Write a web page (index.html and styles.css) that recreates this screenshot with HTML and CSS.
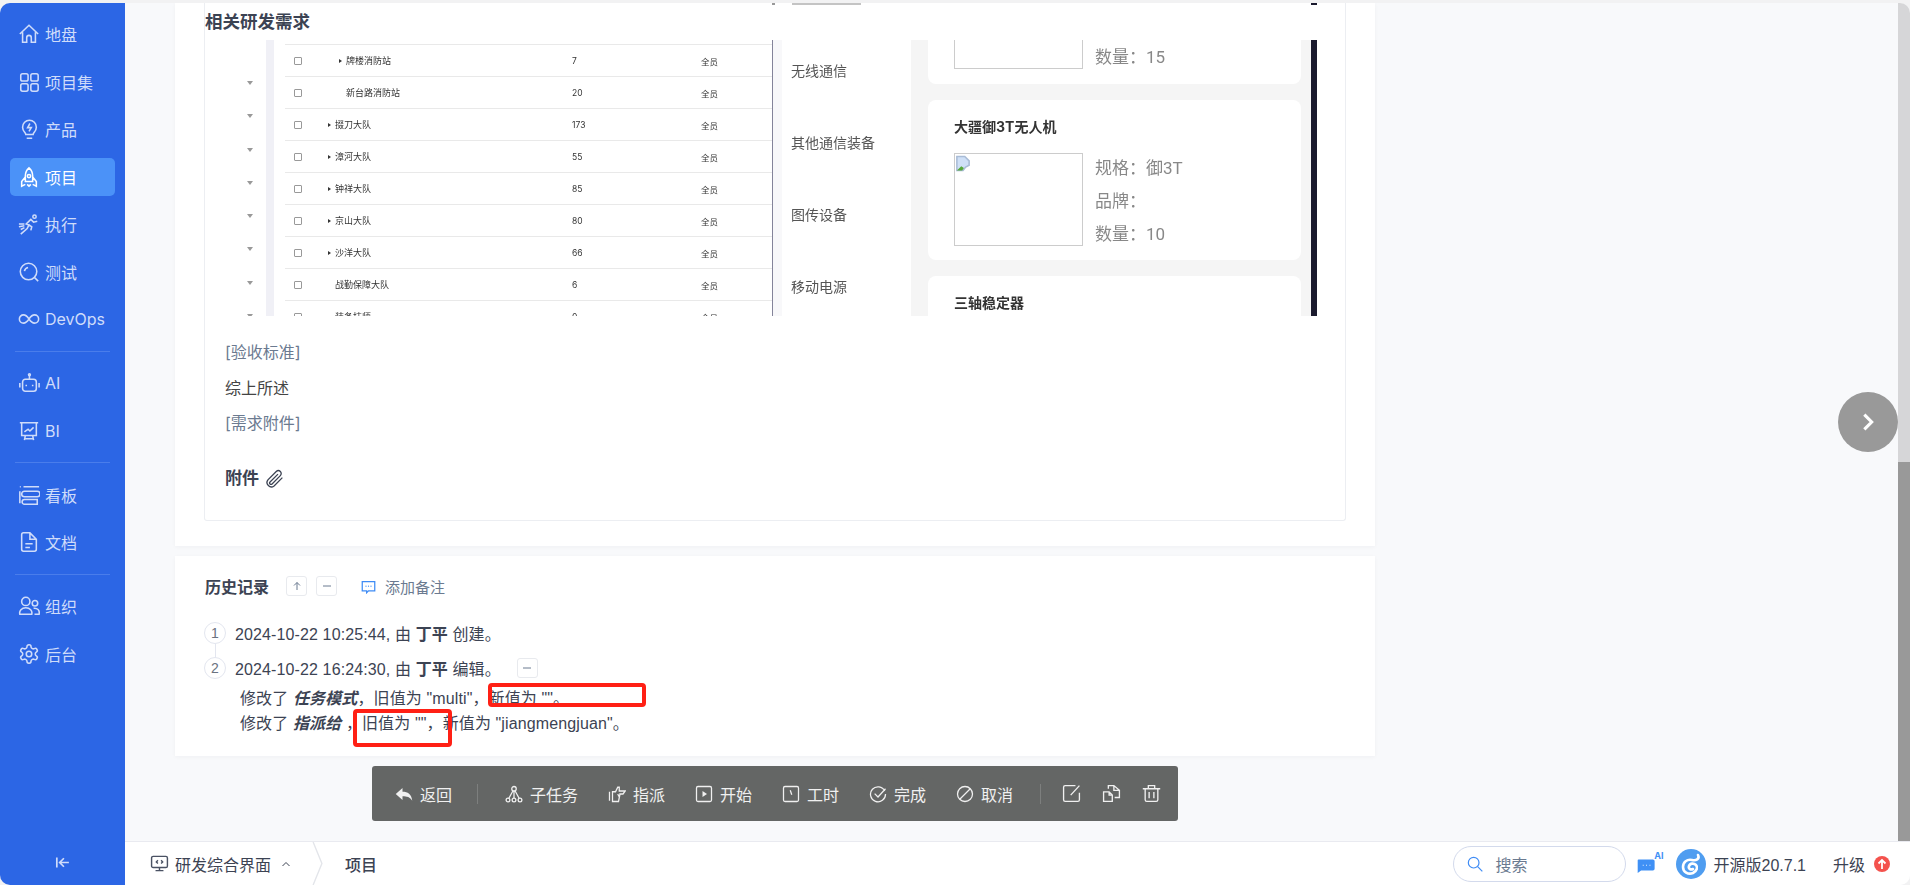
FILE: index.html
```html
<!DOCTYPE html>
<html lang="zh-CN">
<head>
    <meta charset="UTF-8">
    <title>项目 - 研发综合界面</title>
    <link rel="stylesheet" href="styles.css">
</head>
<body>
    <div class="app">
        <aside class="sidebar">
            <nav class="nav">
                <div class="nav-group">
                    <a class="nav-item"><svg viewBox="0 0 24 24"><path d="M2 12 12 2.500 22 12M5 10v11h4.500v-5a2.500 2.500 0 0 1 5 0v5H19V10"/></svg>地盘</a>
                    <a class="nav-item"><svg viewBox="0 0 24 24"><rect x="3" y="3" width="8" height="8" rx="2"/><rect x="14" y="3" width="8" height="8" rx="2"/><rect x="3" y="14" width="8" height="8" rx="2"/><rect x="14" y="14" width="8" height="8" rx="2"/></svg>项目集</a>
                    <a class="nav-item"><svg viewBox="0 0 24 24"><path d="M8.500 18c0-2-3.500-3.500-3.500-8a7.500 7.500 0 0 1 15 0c0 4.500-3.500 6-3.500 8zM9.500 22h6M13 6l-2.500 4.500h4L12 14.500"/></svg>产品</a>
                    <a class="nav-item active"><svg viewBox="0 0 24 24"><path d="M12 2c3 2.500 4 6 4 9v6H8v-6c0-3 1-6.500 4-9zM8 12l-4 5v5l4-2M16 12l4 5v5l-4-2M10 20l2 2 2-2"/><circle cx="12" cy="11" r="1.800"/></svg>项目</a>
                    <a class="nav-item"><svg viewBox="0 0 24 24"><circle cx="18" cy="4" r="1.800"/><path d="M3 23l7-6 2-4-3-1 5-5 3 3 4-1M12 13l3 2-1 4M1 12h6M1 15l6-1M3 18l4-2"/></svg>执行</a>
                    <a class="nav-item"><svg viewBox="0 0 24 24"><circle cx="11.500" cy="11.500" r="9"/><path d="M7 11a5 5 0 0 1 4-4M18 18l4 4"/></svg>测试</a>
                    <a class="nav-item"><svg viewBox="0 0 24 24"><path d="M12 12c-2-3-3.500-4.500-6-4.500a4.500 4.500 0 0 0 0 9c2.500 0 4-1.500 6-4.500s3.500-4.500 6-4.500a4.500 4.500 0 0 1 0 9c-2.500 0-4-1.500-6-4.500z"/></svg>DevOps</a>
                </div>
                <hr class="nav-line">
                <div class="nav-group">
                    <a class="nav-item"><svg viewBox="0 0 24 24"><rect x="5" y="8" width="15" height="13" rx="3"/><path d="M12.500 8V4M2 12v5M23 12v5"/><circle cx="12.500" cy="3" r="1"/><path d="M9 14v1.500M16 14v1.500"/></svg>AI</a>
                    <a class="nav-item"><svg viewBox="0 0 24 24"><path d="M2 3h20M4 3v14h16V3M8 17l-1 5M16 17l1 5M6.500 20.500h11M7 13l4-3 2 2 4-4"/></svg>BI</a>
                </div>
                <hr class="nav-line">
                <div class="nav-group">
                    <a class="nav-item"><svg viewBox="0 0 24 24"><path d="M6 3h17M2 3h1M2 8v13M7 8h14a2 2 0 0 1 0 6H7a2 2 0 0 1 0-6zM7 17h14v5H7a2 2 0 0 1 0-5z"/></svg>看板</a>
                    <a class="nav-item"><svg viewBox="0 0 24 24"><path d="M13 2H6a2 2 0 0 0-2 2v16a2 2 0 0 0 2 2h12a2 2 0 0 0 2-2V9zM13 2v7h7M8 14h8M8 18h5"/></svg>文档</a>
                </div>
                <hr class="nav-line">
                <div class="nav-group">
                    <a class="nav-item"><svg viewBox="0 0 24 24"><circle cx="8.500" cy="7" r="4.500"/><circle cx="18.500" cy="9" r="3"/><path d="M2 21c-1-4 2-7 6.500-7s7.500 3 6.500 7zM17 14.500c4-.5 7 2 6 6.500h-5"/></svg>组织</a>
                    <a class="nav-item"><svg viewBox="0 0 24 24"><path d="M12.220 2h-.44a2 2 0 0 0-2 2v.18a2 2 0 0 1-1 1.730l-.43.25a2 2 0 0 1-2 0l-.15-.08a2 2 0 0 0-2.730.73l-.22.38a2 2 0 0 0 .73 2.730l.15.1a2 2 0 0 1 1 1.720v.51a2 2 0 0 1-1 1.740l-.15.09a2 2 0 0 0-.73 2.730l.22.38a2 2 0 0 0 2.730.73l.15-.08a2 2 0 0 1 2 0l.43.25a2 2 0 0 1 1 1.730V20a2 2 0 0 0 2 2h.44a2 2 0 0 0 2-2v-.18a2 2 0 0 1 1-1.730l.43-.25a2 2 0 0 1 2 0l.15.08a2 2 0 0 0 2.730-.73l.22-.39a2 2 0 0 0-.73-2.730l-.15-.08a2 2 0 0 1-1-1.740v-.5a2 2 0 0 1 1-1.740l.15-.09a2 2 0 0 0 .73-2.730l-.22-.38a2 2 0 0 0-2.730-.73l-.15.08a2 2 0 0 1-2 0l-.43-.25a2 2 0 0 1-1-1.730V4a2 2 0 0 0-2-2z"/><circle cx="12" cy="12" r="3"/></svg>后台</a>
                </div>
            </nav>
            <div class="collapse"><svg viewBox="0 0 24 24"><path d="M4 5v14M21 12H9M14 6l-6 6 6 6"/></svg></div>
        </aside>

        <div class="main">
            <div class="main-body">
                <div class="scroller">
                    <section class="card">
                        <div class="detail-box">
                            <div class="peek"><i class="peek-dot"></i><i class="peek-text"></i><i class="peek-edge"></i></div>
                            <h2 class="detail-title">相关研发需求</h2>
                            <div class="shot">
                                <div class="shot-arrows">
                                    <i></i><i></i><i></i><i></i><i></i><i></i><i></i><i></i>
                                </div>
                                <div class="shot-band"></div>
                                <div class="shot-table">
                                    <div class="row"><b class="check"></b><span class="name sub"><em></em>牌楼消防站</span><span class="num">7</span><span>全员</span></div>
                                    <div class="row"><b class="check"></b><span class="name sub">新台路消防站</span><span class="num">20</span><span>全员</span></div>
                                    <div class="row"><b class="check"></b><span class="name"><em></em>掇刀大队</span><span class="num">173</span><span>全员</span></div>
                                    <div class="row"><b class="check"></b><span class="name"><em></em>漳河大队</span><span class="num">55</span><span>全员</span></div>
                                    <div class="row"><b class="check"></b><span class="name"><em></em>钟祥大队</span><span class="num">85</span><span>全员</span></div>
                                    <div class="row"><b class="check"></b><span class="name"><em></em>京山大队</span><span class="num">80</span><span>全员</span></div>
                                    <div class="row"><b class="check"></b><span class="name"><em></em>沙洋大队</span><span class="num">66</span><span>全员</span></div>
                                    <div class="row"><b class="check"></b><span class="name">战勤保障大队</span><span class="num">6</span><span>全员</span></div>
                                    <div class="row"><b class="check"></b><span class="name">装备技师</span><span class="num">0</span><span>全员</span></div>
                                </div>
                                <ul class="shot-menu">
                                    <li>无线通信</li>
                                    <li>其他通信装备</li>
                                    <li>图传设备</li>
                                    <li>移动电源</li>
                                </ul>
                                <div class="shot-panel">
                                    <div class="gear gear-cut">
                                        <div class="gear-pic"></div>
                                        <div class="gear-info"><p>数量：15</p></div>
                                    </div>
                                    <div class="gear">
                                        <h4>大疆御3T无人机</h4>
                                        <div class="gear-body">
                                            <div class="gear-pic">
                                                <svg class="broken" viewBox="0 0 16 18"><path d="M1 1h9l5 5v5l-4 2-3 4H1z" fill="#cfe0f7" stroke="#a9bcd6"/><path d="M1 17l5-5 3 2-2 3z" fill="#57a83a"/></svg>
                                            </div>
                                            <div class="gear-info"><p>规格：御3T</p><p>品牌：</p><p>数量：10</p></div>
                                        </div>
                                    </div>
                                    <div class="gear">
                                        <h4>三轴稳定器</h4>
                                    </div>
                                </div>
                                <div class="shot-edge"></div>
                            </div>
                            <p class="para para-first muted">[验收标准]</p>
                            <p class="para">综上所述</p>
                            <p class="para muted">[需求附件]</p>
                            <h3 class="files">附件
                                <svg viewBox="0 0 24 24"><path d="M21 11l-9.500 9.500a5 5 0 0 1-7-7L14 4a3.300 3.300 0 0 1 4.700 4.700l-9.500 9.500a1.600 1.600 0 0 1-2.300-2.300L16 7"/></svg>
                            </h3>
                        </div>
                    </section>

                    <section class="card history">
                        <div class="history-head">
                            <h3>历史记录</h3>
                            <button class="mini-btn"><svg viewBox="0 0 24 24"><path d="M12 20V5M6 11l6-6 6 6"/></svg></button>
                            <button class="mini-btn"><svg viewBox="0 0 24 24"><path d="M4 12h16"/></svg></button>
                            <a class="add-note"><svg viewBox="0 0 24 24"><path d="M2 4h20v15H12l-3 3v-3H2z"/><path class="dots" d="M8 11.500h.01M12 11.500h.01M16 11.500h.01"/></svg>添加备注</a>
                        </div>
                        <ol class="timeline">
                            <li class="log"><span class="step">1</span>2024-10-22 10:25:44, 由 <strong>丁平</strong> 创建。</li>
                            <li class="log"><span class="step step-link">2</span>2024-10-22 16:24:30, 由 <strong>丁平</strong> 编辑。<button class="mini-btn log-btn"><svg viewBox="0 0 24 24"><path d="M4 12h16"/></svg></button></li>
                        </ol>
                        <div class="changes">
                            <p>修改了 <b>任务模式</b>，旧值为 "multi"，新值为 ""。</p>
                            <p>修改了 <b>指派给</b> ，旧值为 ""，新值为 "jiangmengjuan"。</p>
                        </div>
                        <div class="mark mark-new"></div>
                        <div class="mark mark-old"></div>
                    </section>

                    <div class="toolbar-wrap">
                        <div class="toolbar">
                            <a class="tool"><svg viewBox="0 0 24 24"><path class="solid" d="M10 4v5c7 0 12 3 13 12-3-5-7-6-13-6v5L1 12z"/></svg>返回</a>
                            <span class="tool-line tool-line-a"></span>
                            <a class="tool"><svg viewBox="0 0 24 24"><circle cx="12" cy="5" r="3"/><circle cx="4" cy="20" r="2.500"/><circle cx="12" cy="20" r="2.500"/><circle cx="20" cy="20" r="2.500"/><path d="M10.500 8 5 18M12 8v10M13.500 8 19 18"/></svg>子任务</a>
                            <a class="tool"><svg viewBox="0 0 24 24"><path d="M2 9v12M6 9h4l3-6h2v5h8l-3 4h-4l-1 5-1 5H6zM15 12h5M13 12l2 4"/></svg>指派</a>
                            <a class="tool"><svg viewBox="0 0 24 24"><rect x="2" y="2" width="20" height="20" rx="2"/><path class="solid" d="M10 8l6 4-6 4z"/></svg>开始</a>
                            <a class="tool"><svg viewBox="0 0 24 24"><rect x="2" y="2" width="20" height="20" rx="2"/><path d="M11 7l2 6"/></svg>工时</a>
                            <a class="tool"><svg viewBox="0 0 24 24"><path d="M21 8a10 10 0 1 0 1 4M7.500 11.500 12 16l10-11"/></svg>完成</a>
                            <a class="tool"><svg viewBox="0 0 24 24"><circle cx="12" cy="12" r="10"/><path d="M5 19 19 5"/></svg>取消</a>
                            <span class="tool-line tool-line-b"></span>
                            <a class="tool tool-icon"><svg viewBox="0 0 24 24"><path d="M22 11v9a2 2 0 0 1-2 2H4a2 2 0 0 1-2-2V4a2 2 0 0 1 2-2h13M22 2 11 14"/></svg></a>
                            <a class="tool tool-icon"><svg viewBox="0 0 24 24"><path d="M2 10h7l4 4v8H2zM9 10v4h4M8 6V2h7l7 6v9h-6M15 2v6h7"/></svg></a>
                            <a class="tool tool-icon"><svg viewBox="0 0 24 24"><path d="M1 6h22M8 6V2h8v4M4 6v14a2 2 0 0 0 2 2h12a2 2 0 0 0 2-2V6M9 10v8M15 10v8"/></svg></a>
                        </div>
                    </div>

                    <button class="next-btn"><svg viewBox="0 0 24 24"><path d="M8 4l8 8-8 8"/></svg></button>
                </div>
                <div class="scrollbar"><div class="scroll-thumb"></div></div>
            </div>

            <footer class="footer">
                <div class="crumbs">
                    <svg class="crumb-icon" viewBox="0 0 24 24"><rect x="2" y="3" width="20" height="14" rx="2"/><path d="M12 17v4M7 21h10M10 8l-2 2 2 2M14 8l2 2-2 2"/></svg>
                    <span class="crumb-app">研发综合界面</span>
                    <svg class="crumb-caret" viewBox="0 0 24 24"><path d="M5 16l7-7 7 7"/></svg>
                    <svg class="crumb-sep" viewBox="0 0 12 44"><path d="M1 0l9 22-9 22"/></svg>
                    <span class="crumb-now">项目</span>
                </div>
                <div class="foot-right">
                    <div class="search">
                        <svg viewBox="0 0 24 24"><circle cx="10" cy="10" r="8"/><path d="M16 16l7 7"/></svg>
                        <span>搜索</span>
                    </div>
                    <div class="ai-chat">
                        <svg viewBox="0 0 26 20"><path d="M3 4h17a2 2 0 0 1 2 2v9a2 2 0 0 1-2 2H6l-4 3V5a1 1 0 0 1 1-1z" fill="#3f90f5"/><path d="M8 11h1M12 11h1M16 11h1" stroke="#fff" stroke-width="1.200"/></svg>
                        <span>AI</span>
                    </div>
                    <svg class="logo" viewBox="0 0 30 30"><circle cx="15" cy="15" r="15" fill="#4f9df0"/><path d="M22 6c2 4-2 6-6 5-5-1-9 2-9 7s5 8 10 6c4-2 5-6 3-8s-6-2-7 1 2 4 4 3" fill="none" stroke="#fff" stroke-width="2.600" stroke-linecap="round"/></svg>
                    <span class="version">开源版20.7.1</span>
                    <span class="upgrade">升级</span>
                    <svg class="up-dot" viewBox="0 0 16 16"><circle cx="8" cy="8" r="8" fill="#f4524d"/><path d="M8 13V4M4.500 7.500 8 4l3.500 3.500" fill="none" stroke="#fff" stroke-width="1.800"/></svg>
                </div>
            </footer>
        </div>
    </div>
</body>
</html>
```

FILE: styles.css
```css
:root {
    --blue: #2c66e5;
    --page: #f8f9fb;
    --text: #3c4353;
    --muted: #6b7a90;
    --line: #eceef2;
}

* {
    box-sizing: border-box;
}

html, body {
    height: 100%;
    overflow: hidden;
}

body {
    margin: 0;
    font-family: Inter, "Noto Sans CJK SC", sans-serif;
    font-size: 15px;
    color: var(--text);
    background: #f2f2f3;
}

svg {
    fill: none;
    stroke: currentColor;
    stroke-width: 1.8;
    flex: none;
}

.app {
    display: flex;
    height: 885px;
    padding-top: 3px;
}

/* sidebar */
.sidebar {
    width: 125px;
    flex: none;
    display: flex;
    flex-direction: column;
    justify-content: space-between;
    background: var(--blue);
    border-radius: 10px 0 0 10px;
}

.nav {
    padding-top: 12px;
}

.nav-group {
    display: flex;
    flex-direction: column;
    gap: 9.5px;
}

.nav-item {
    display: flex;
    align-items: center;
    gap: 5px;
    height: 38px;
    margin: 0 10px;
    padding-left: 8px;
    border-radius: 5px;
    font-size: 16px;
    color: #cfdcfa;
}

.nav-item svg {
    width: 22px;
    height: 22px;
    stroke-width: 1.7;
}

.nav-item.active {
    background: #4b92f8;
    color: #fff;
}

.nav-line {
    height: 1px;
    margin: 12.5px 15px;
    border: 0;
    background: #4a7deb;
}

.collapse {
    display: flex;
    justify-content: center;
    padding-bottom: 14px;
    color: #cfdcfa;
}

.collapse svg {
    width: 17px;
    height: 17px;
    stroke-width: 2.4;
}

/* main column */
.main {
    flex: 1;
    min-width: 0;
    display: flex;
    flex-direction: column;
    background: var(--page);
    border-radius: 0 10px 10px 0;
    overflow: hidden;
}

.main-body {
    flex: 1;
    min-height: 0;
    display: flex;
}

.scroller {
    position: relative;
    flex: 1;
    padding-left: 50px;
    overflow: hidden;
}

.scrollbar {
    width: 12px;
    flex: none;
    padding-top: 459px;
    background: #d6d6d8;
}

.scroll-thumb {
    height: 100%;
    background: #999;
}

.card {
    width: 1200px;
    padding: 0 29px 25px;
    background: #fff;
    box-shadow: 0 1px 4px rgba(20, 30, 60, .04);
}

.detail-box {
    height: 518px;
    padding: 0 20px 0 20px;
    border: 1px solid var(--line);
    border-top: 0;
    border-radius: 0 0 3px 3px;
}

/* bottom of the picture showing above the sticky title */
.peek {
    display: flex;
    align-items: stretch;
    width: 1092px;
    height: 2px;
    padding-left: 547px;
}

.peek-dot {
    width: 3px;
    background: #999;
}

.peek-text {
    width: 69px;
    margin-left: 17px;
    background: #c4c4c4;
}

.peek-edge {
    width: 6px;
    margin-left: auto;
    background: #1a1a2e;
}

.detail-title {
    height: 35px;
    margin: 0 0 0 -20px;
    padding-top: 5px;
    font-size: 17.500px;
    line-height: 24px;
    font-weight: 700;
    white-space: nowrap;
}

/* the picture pasted in the description */
.shot {
    display: flex;
    width: 1092px;
    height: 276px;
    overflow: hidden;
    filter: blur(.35px);
}

.shot-arrows {
    width: 41px;
    flex: none;
    display: flex;
    flex-direction: column;
    align-items: center;
    gap: 29.3px;
    padding: 41px 0 0 9px;
}

.shot-arrows i {
    width: 0;
    height: 0;
    border: 3px solid transparent;
    border-top: 4px solid #999;
    border-bottom: 0;
}

.shot-band {
    width: 8px;
    flex: none;
    margin-right: 11px;
    background: #f0f0f6;
}

.shot-table {
    width: 488px;
    flex: none;
    padding-top: 4px;
    border-right: 1px solid #84849a;
    font-size: 8.500px;
    color: #333;
}

.row {
    display: flex;
    align-items: center;
    height: 32px;
    border-top: 1px solid #e9e9e9;
}

.check {
    width: 8px;
    height: 8px;
    margin-left: 9px;
    border: 1px solid #999;
    border-radius: 1px;
}

.name {
    display: flex;
    align-items: center;
    width: 270px;
    padding-left: 33px;
    font-size: 9px;
}

.name.sub {
    padding-left: 44px;
}

.name em {
    width: 0;
    height: 0;
    margin: 0 4px 0 -7px;
    border: 2px solid transparent;
    border-left: 3px solid #333;
    border-right: 0;
}

.num {
    width: 129px;
}

.shot-menu {
    width: 138px;
    flex: none;
    margin: -6px 0 0;
    padding: 0 0 0 9px;
    border-left: 9px solid #f8f8fa;
    list-style: none;
    font-size: 14px;
    color: #555;
}

.shot-menu li {
    display: flex;
    align-items: center;
    height: 72px;
    white-space: nowrap;
}

.shot-panel {
    width: 400px;
    flex: none;
    padding: 0 10px 0 17px;
    background: #f5f5f5;
}

.gear {
    height: 160px;
    margin-bottom: 16px;
    padding: 16px 26px 0;
    background: #fff;
    border-radius: 8px;
}

.gear-cut {
    display: flex;
    gap: 12px;
    height: 44px;
    padding-top: 0;
    border-radius: 0 0 8px 8px;
}

.gear-cut .gear-pic {
    height: 29px;
    border-top: 0;
}

.gear h4 {
    margin: 0 0 15px;
    font-size: 14px;
    line-height: 22px;
    font-weight: 700;
    color: #333;
}

.gear-body {
    display: flex;
    gap: 12px;
}

.gear-pic {
    position: relative;
    width: 129px;
    height: 93px;
    flex: none;
    border: 1px solid #ccc;
}

.broken {
    position: absolute;
    left: 1px;
    top: 1px;
    width: 14px;
    height: 17px;
    stroke: none;
}

.gear-info {
    padding-top: 2px;
    font-family: Roboto, "Noto Sans CJK SC", sans-serif;
    font-size: 17px;
    color: #888;
}

.gear-info p {
    height: 33px;
    margin: 0;
    line-height: 26px;
    white-space: nowrap;
}

.gear-cut .gear-info {
    padding-top: 0;
}

.gear-cut .gear-info p {
    margin-top: 4px;
}

.shot-edge {
    width: 6px;
    flex: none;
    background: #1a1a2e;
}

.para {
    margin: 0 0 11.500px;
    font-size: 16px;
    line-height: 24px;
    color: #444;
}

.para-first {
    margin-top: 24px;
}

.para.muted {
    color: var(--muted);
}

.files {
    display: flex;
    align-items: center;
    gap: 5px;
    margin: 31px 0 0;
    font-size: 17px;
    line-height: 24px;
    font-weight: 700;
}

.files svg {
    width: 21px;
    height: 21px;
    stroke-width: 1.500;
}

/* history */
.history {
    position: relative;
    height: 200px;
    margin-top: 10px;
    padding: 20px 30px;
    font-family: "Liberation Sans", "Noto Sans CJK SC", sans-serif;
    font-size: 16px;
}

.history-head {
    display: flex;
    align-items: center;
    height: 20px;
}

.history-head h3 {
    margin: 0 17px 0 0;
    font-size: 16px;
    font-weight: 700;
    white-space: nowrap;
}

.history-head .mini-btn + .mini-btn {
    margin-left: 9px;
}

.mini-btn {
    display: inline-flex;
    align-items: center;
    justify-content: center;
    width: 21px;
    height: 20px;
    padding: 0;
    background: #fff;
    border: 1px solid #e8eaee;
    border-radius: 3px;
    color: var(--muted);
}

.mini-btn svg {
    width: 12px;
    height: 12px;
    stroke-width: 2;
}

.add-note {
    display: flex;
    align-items: center;
    gap: 9px;
    margin-left: 24px;
    font-size: 15px;
    color: var(--muted);
}

.add-note svg {
    width: 15px;
    height: 15px;
    color: #3f8cf5;
    stroke-width: 2;
}

.add-note .dots {
    stroke-linecap: round;
}

.timeline {
    margin: 25px 0 0;
    padding: 0;
    list-style: none;
}

.log {
    display: flex;
    align-items: center;
    height: 24px;
    margin-bottom: 11px;
    margin-left: -1px;
    letter-spacing: .12px;
    white-space: pre;
}

.log strong {
    font-size: 16px;
    font-weight: 700;
}

.step {
    position: relative;
    display: flex;
    align-items: center;
    justify-content: center;
    width: 22px;
    height: 22px;
    margin-right: 9px;
    border: 1px solid #e3e6ef;
    border-radius: 50%;
    font-size: 14px;
    color: #6b7280;
}

.step-link::before {
    content: "";
    position: absolute;
    left: 10px;
    top: -14px;
    width: 1px;
    height: 14px;
    background: #e3e6ef;
}

.log-btn {
    margin-left: 16px;
}

.changes {
    margin: -5.500px 0 0 35px;
    line-height: 25px;
    letter-spacing: .12px;
    white-space: nowrap;
}

.changes p {
    margin: 0;
}

.changes b {
    font-style: italic;
}

.mark {
    position: absolute;
    border: 4px solid #ff2015;
    border-radius: 4px;
}

.mark-new {
    left: 313px;
    top: 127px;
    width: 158px;
    height: 24px;
}

.mark-old {
    left: 178px;
    top: 153px;
    width: 99px;
    height: 38px;
}

/* floating action bar */
.toolbar-wrap {
    display: flex;
    justify-content: center;
    width: 1200px;
    margin-top: 10px;
}

.toolbar {
    display: flex;
    align-items: center;
    gap: 30px;
    width: 806px;
    height: 55px;
    padding-left: 23px;
    background: #646665;
    border-radius: 3px;
}

.tool {
    display: flex;
    align-items: center;
    gap: 7px;
    font-size: 16px;
    color: #f0f0f0;
    white-space: nowrap;
}

.tool svg {
    width: 18px;
    height: 18px;
    stroke-width: 1.700;
}

.tool .solid {
    fill: currentColor;
    stroke: none;
}

.tool-icon svg {
    width: 19px;
    height: 19px;
}

.tool-icon + .tool-icon {
    margin-left: -9px;
}

.tool-line {
    width: 1px;
    height: 20px;
    background: #7d7f7e;
}

.tool-line-a {
    margin: 0 -3px 0 -5px;
}

.tool-line-b {
    margin: 0 -9px 0 -3px;
}

.next-btn {
    position: absolute;
    right: 0;
    top: 389px;
    display: flex;
    align-items: center;
    justify-content: center;
    width: 60px;
    height: 60px;
    padding: 0;
    border: 0;
    border-radius: 50%;
    background: #999;
    color: #fff;
}

.next-btn svg {
    width: 22px;
    height: 22px;
    stroke-width: 3.400;
}

/* bottom bar */
.footer {
    display: flex;
    align-items: center;
    justify-content: space-between;
    height: 44px;
    flex: none;
    background: #fff;
    border-top: 1px solid #e9eaf0;
}

.crumbs {
    display: flex;
    align-items: center;
    padding-left: 25px;
}

.crumb-icon {
    width: 19px;
    height: 19px;
    margin-right: 6px;
    color: #4a5263;
}

.crumb-app {
    font-size: 16px;
    white-space: nowrap;
}

.crumb-caret {
    width: 12px;
    height: 12px;
    margin-left: 9px;
    stroke-width: 2;
}

.crumb-sep {
    width: 12px;
    height: 43px;
    margin-left: 20px;
    color: #e3e5ea;
    stroke-width: 1.400;
}

.crumb-now {
    margin-left: 21px;
    font-size: 16px;
    font-weight: 500;
    white-space: nowrap;
}

.foot-right {
    display: flex;
    align-items: center;
    padding-right: 20px;
}

.search {
    display: flex;
    align-items: center;
    gap: 12px;
    width: 173px;
    height: 36px;
    padding-left: 13px;
    border: 1px solid #d3daec;
    border-radius: 18px;
    font-size: 16px;
    color: var(--muted);
}

.search svg {
    width: 16px;
    height: 16px;
    color: #3f8cf5;
    stroke-width: 1.800;
}

.ai-chat {
    position: relative;
    width: 26px;
    height: 22px;
    margin-left: 10px;
}

.ai-chat svg {
    position: absolute;
    left: 0;
    top: 3px;
    width: 22px;
    height: 17px;
    stroke: none;
}

.ai-chat span {
    position: absolute;
    right: -1px;
    top: -3px;
    font-size: 9px;
    font-weight: 700;
    color: #3f90f5;
}

.logo {
    width: 30px;
    height: 30px;
    margin-left: 14px;
    stroke: none;
}

.version {
    margin-left: 7px;
    font-family: "Liberation Sans", "Noto Sans CJK SC", sans-serif;
    font-size: 16px;
    white-space: nowrap;
}

.upgrade {
    margin-left: 27px;
    font-size: 16px;
    white-space: nowrap;
}

.up-dot {
    width: 16px;
    height: 16px;
    margin-left: 9px;
    stroke: none;
}
```
